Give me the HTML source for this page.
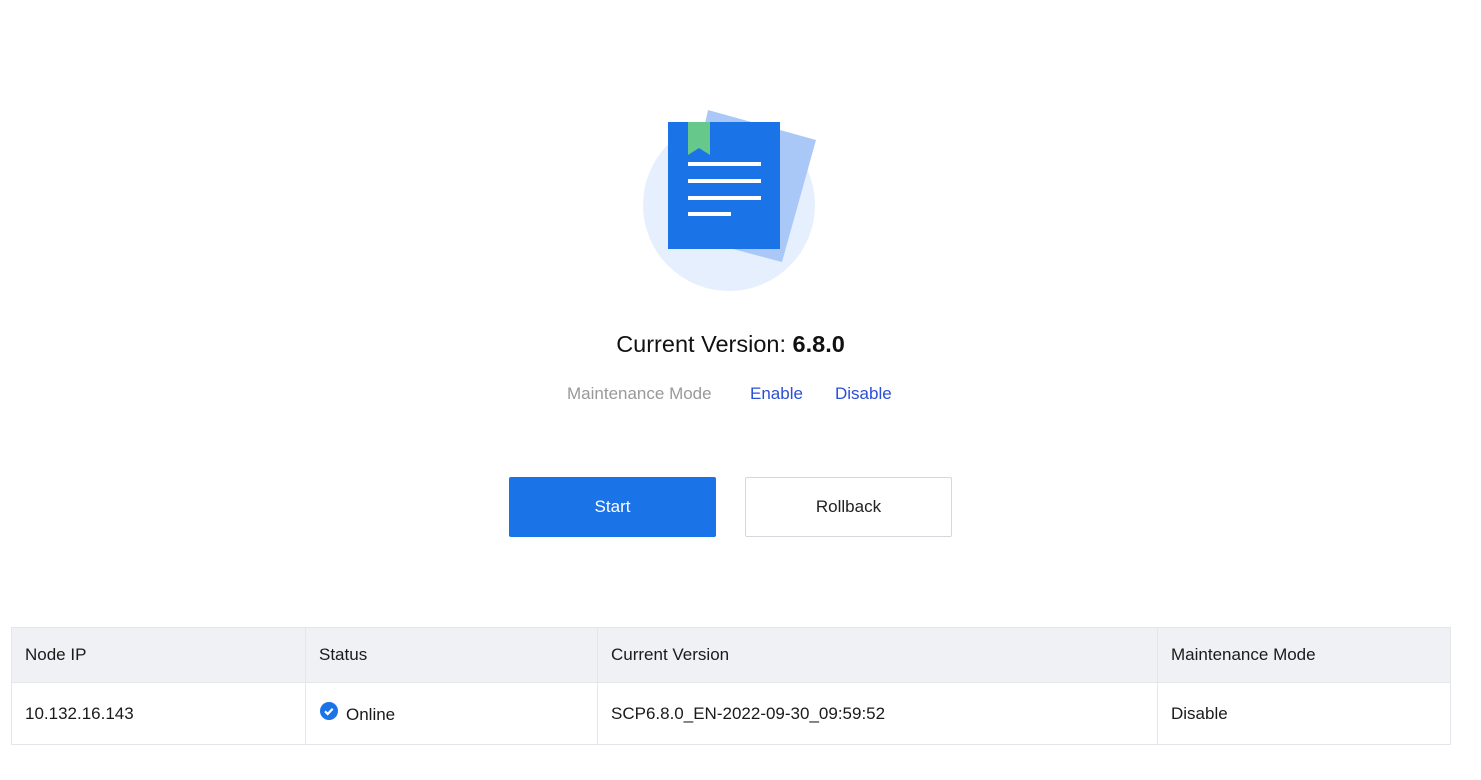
<!DOCTYPE html>
<html><head><style>
body{margin:0;width:1481px;height:780px;background:#fff;font-family:"Liberation Sans",Arial,sans-serif;position:relative;overflow:hidden}
.abs{position:absolute}
table{position:absolute;left:11px;top:627px;width:1440px;border-collapse:collapse;font-size:17px;color:#1a1a1a}
td{border:1px solid #e4e6eb;padding:0 13px;text-align:left}
tr.h td{background:#f0f1f4;height:54px}
tr.r td{height:61px}
</style></head><body>
<svg class="abs" style="left:0;top:0" width="1481" height="300">
<circle cx="729" cy="205" r="86" fill="#e6effd"/>
<polygon points="708,110 816,140 782,262 680,235" fill="#a9c8f8"/>
<rect x="668" y="122" width="112" height="127" fill="#1b73e8"/>
<polygon points="688,122 710,122 710,155 699,148 688,155" fill="#66c88a"/>
<rect x="688" y="162" width="73" height="4" fill="#fff"/>
<rect x="688" y="179" width="73" height="4" fill="#fff"/>
<rect x="688" y="196" width="73" height="4" fill="#fff"/>
<rect x="688" y="212" width="43" height="4" fill="#fff"/>
</svg>
<div class="abs" style="left:0;width:1461px;top:331px;text-align:center;font-size:23.5px;color:#111">Current Version: <b>6.8.0</b></div>
<div class="abs" style="left:567px;top:384px;font-size:17px;color:#999">Maintenance Mode</div>
<div class="abs" style="left:750px;top:384px;font-size:17px;color:#2a4fd6">Enable</div>
<div class="abs" style="left:835px;top:384px;font-size:17px;color:#2a4fd6">Disable</div>
<div class="abs" style="left:509px;top:477px;width:207px;height:60px;background:#1b73e8;border-radius:2px;color:#fff;font-size:17px;line-height:60px;text-align:center">Start</div>
<div class="abs" style="left:745px;top:477px;width:205px;height:58px;border:1px solid #d5d7dc;border-radius:2px;color:#222;font-size:17px;line-height:58px;text-align:center">Rollback</div>
<table>
<tr class="h"><td style="width:267px">Node IP</td><td style="width:265px">Status</td><td style="width:533px">Current Version</td><td>Maintenance Mode</td></tr>
<tr class="r"><td>10.132.16.143</td><td><svg width="18" height="18" viewBox="0 0 18 18" style="vertical-align:0px;margin-right:8px;margin-left:1px"><circle cx="9" cy="9" r="9" fill="#1b73e8"/><path d="M5 9.3l2.7 2.7 5-5.3" stroke="#fff" stroke-width="2.2" fill="none"/></svg>Online</td><td>SCP6.8.0_EN-2022-09-30_09:59:52</td><td>Disable</td></tr>
</table>
</body></html>
